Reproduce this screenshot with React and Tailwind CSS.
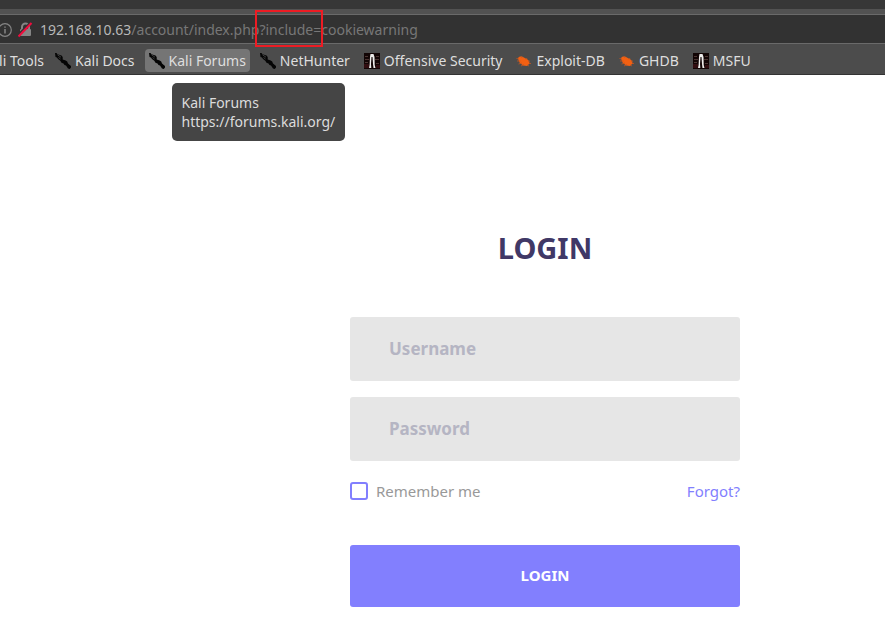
import React from 'react';

const NetHunterIcon = () => (
  <svg viewBox="0 0 16 16" className="h-4 w-4 shrink-0" aria-hidden="true">
    <path d="M0 0h1.500l1 1.200 4 1.300 1.200 1.500v2.500l3 1 1.500 1 .8 2 3 2.500v1.500l-1.200 1.500-1.800-.5-2-3-1.500-.5-1-1.500-2-.8-1.200-2L3 6 2 4.500.5 4z" fill="#050505" />
    <path d="M2.500 1.800L6 4.200M3.500 4.500l2 1.500" stroke="#777" strokeWidth=".5" fill="none" />
  </svg>
);

const OffsecIcon = () => (
  <svg viewBox="0 0 16 16" className="h-4 w-4 shrink-0" aria-hidden="true">
    <rect width="16" height="16" fill="#120505" />
    <path d="M1 3h3v1H1zM1 6h4v1H1zM12 3h3v1h-3zM11 6h4v1h-4zM1 9h3v1H1zM12 10h3v1h-3z" fill="#4d3533" />
    <path d="M0 11h5v4H0zM12 12h4v3h-4z" fill="#310d10" />
    <path d="M6.500 1h3l1 3 .2 8 .8 3h-2L9 11 8.500 4h-1L7 11l.3 4H5l.6-3L6 4z" fill="#eeecea" />
  </svg>
);

const BugIcon = () => (
  <svg viewBox="0 0 16 16" className="h-4 w-4 shrink-0" aria-hidden="true">
    <path d="M2 5.500C2.500 3.500 5 3 7 4l4.500 2.500c1.500 1 2 2.500 2 4L11 13l-4-.5L3.500 9.500z" fill="#f26012" />
    <path d="M3 6L.5 5.500M4.500 8L1 8M6 10l-3.500 1M8 11.500l-3 1.500M6 5L5.500 3.500M10 6.500l1-1.500M12 8.500l2-.5M13 10.500h2M11 12l2 1" stroke="#c65520" strokeWidth=".8" fill="none" />
  </svg>
);

const bookmarks = [
  { label: 'Kali Docs', Icon: NetHunterIcon, href: '#docs' },
  { label: 'Kali Forums', Icon: NetHunterIcon, href: '#forums', active: true, tip: 'https://forums.kali.org/' },
  { label: 'NetHunter', Icon: NetHunterIcon, href: '#nethunter' },
  { label: 'Offensive Security', Icon: OffsecIcon, href: '#offsec' },
  { label: 'Exploit-DB', Icon: BugIcon, href: '#exploit-db' },
  { label: 'GHDB', Icon: BugIcon, href: '#ghdb' },
  { label: 'MSFU', Icon: OffsecIcon, href: '#msfu' },
];

function AddressBar() {
  return (
    <div className="flex h-[30px] items-center border-y border-[#6a6a6a] bg-[#323232] pt-0.5 text-sm text-[#777]">
      <svg viewBox="0 0 12 14" className="h-3.5 w-3 shrink-0" fill="none" stroke="#858585" aria-label="Site information">
        <circle cx="5" cy="7" r="6.300" strokeWidth="1.200" />
        <path d="M5 6v4.500M5 3.500v1.300" strokeWidth="1.500" />
      </svg>
      <svg viewBox="0 0 16 16" className="ml-1.5 h-4 w-4 shrink-0" aria-label="Connection is not secure">
        <path d="M4 8V5a3.500 3.500 0 017 0v3" fill="none" stroke="#858585" strokeWidth="2" />
        <rect x="2" y="7" width="11" height="7" rx="1" fill="#858585" />
        <path d="M-.5 13.500L12.500 .5" stroke="#323232" strokeWidth="2" />
        <path d="M.5 14.500L13.500 1" stroke="#f00c3d" strokeWidth="2" />
      </svg>
      <div className="ml-1.5 whitespace-nowrap">
        <span className="text-[#b8b8b8]">192.168.10.63</span>
        <span>/account/index.php</span>
        <span className="relative">
          ?include=
          <span className="absolute -left-1 -right-0.5 -top-2.5 z-10 h-[37px] border-2 border-[#ed1c24]" />
        </span>
        <span>cookiewarning</span>
      </div>
    </div>
  );
}

function BookmarksBar() {
  return (
    <nav className="flex h-[31px] items-center border-b border-[#333] bg-[#4c4c4c] pt-0.5 text-sm text-[#dedede]">
      <a href="#tools" className="flex w-11 shrink-0 justify-end whitespace-nowrap pt-0.5">li Tools</a>
      <div className="ml-[7px] flex items-center gap-1.5">
        {bookmarks.map(({ label, Icon, href, active, tip }) => (
          <div key={label} className="relative">
            <a
              href={href}
              className={`flex h-[23px] items-center gap-1 whitespace-nowrap rounded px-1 pt-0.5 ${active ? 'bg-[#757575]' : ''}`}
            >
              <Icon />
              {label}
            </a>
            {tip && (
              <div role="tooltip" className="absolute left-[27px] top-[34px] z-20 whitespace-nowrap rounded-[5px] bg-[#454545] px-2.5 py-2.5 leading-[19px] text-[#dcdcdc]">
                <div>{label}</div>
                <div>{tip}</div>
              </div>
            )}
          </div>
        ))}
      </div>
    </nav>
  );
}

const fieldClass =
  'block h-16 w-full rounded-[3px] bg-[#e6e6e6] px-[39px] pb-0.5 text-[17px] font-bold text-[#403866] outline-none placeholder:text-[#b5b5c3] placeholder:opacity-100';

function LoginForm() {
  return (
    <form className="w-full max-w-[390px]" onSubmit={(e) => e.preventDefault()}>
      <h1 className="mb-[51px] text-center text-[29px] font-bold leading-9 text-[#403866]">LOGIN</h1>
      <div className="flex flex-col gap-4">
        <input aria-label="Username" placeholder="Username" className={fieldClass} />
        <input aria-label="Password" type="password" placeholder="Password" className={fieldClass} />
      </div>
      <div className="flex items-center justify-between pb-[42px] pt-[18px] text-[15px] leading-6">
        <label className="flex items-center gap-2 text-[#999]">
          <input type="checkbox" className="h-[18px] w-[18px] appearance-none rounded-[3px] border-2 border-[#827ffe] bg-white checked:bg-[#827ffe]" />
          Remember me
        </label>
        <a href="#forgot" className="text-[#827ffe]">Forgot?</a>
      </div>
      <button type="submit" className="h-[62px] w-full rounded-[3px] bg-[#827ffe] pb-0.5 text-[15px] font-bold text-white">LOGIN</button>
    </form>
  );
}

export default function App() {
  return (
    <div className="min-h-screen overflow-hidden bg-white">
      <header className="font-['Noto_Sans','Open_Sans',sans-serif]">
        <div className="h-[9px] bg-[#373737]" />
        <div className="h-[5px] bg-[#525252]" />
        <AddressBar />
        <BookmarksBar />
      </header>
      <main className="flex justify-center pb-4 pl-[205px] pt-[155px] font-['Noto_Sans','Open_Sans',sans-serif]">
        <LoginForm />
      </main>
    </div>
  );
}
